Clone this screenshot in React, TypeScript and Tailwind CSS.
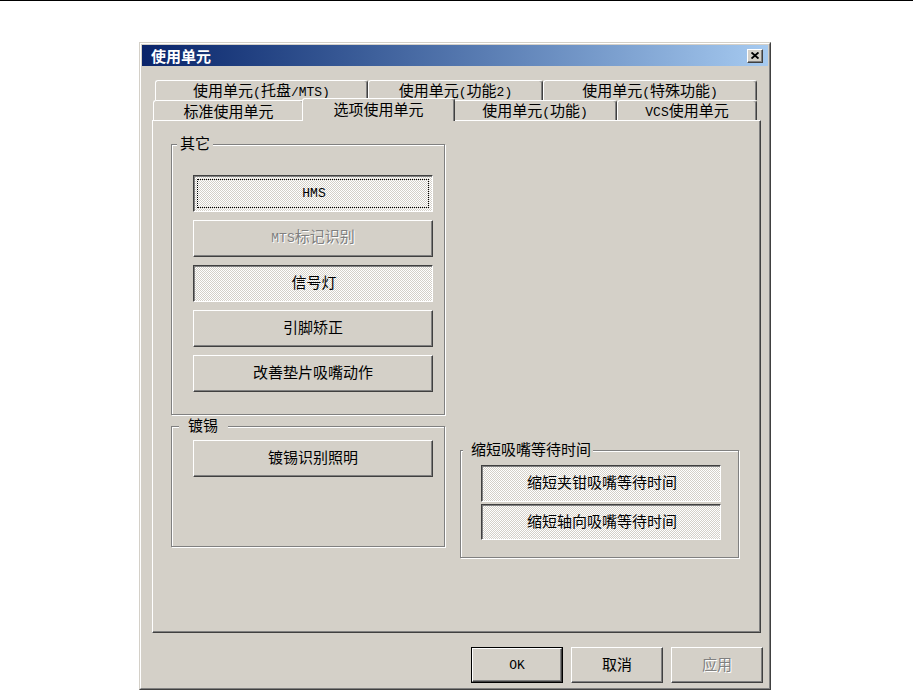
import React from "react";

function T({ s }: { s: string }) {
  const parts = s.split(/([\x00-\x7f]+)/).filter((p) => p.length > 0);
  return (
    <span className="whitespace-pre">
      {parts.map((p, i) =>
        /^[\x00-\x7f]+$/.test(p) ? (
          <span key={i} className="font-['Liberation_Mono',monospace] text-[13px]">
            {p}
          </span>
        ) : (
          <span key={i}>{p}</span>
        )
      )}
    </span>
  );
}

type BtnProps = {
  label: string;
  state?: "normal" | "pressed" | "disabled";
  focus?: boolean;
  className?: string;
};

function Btn({ label, state = "normal", focus = false, className = "" }: BtnProps) {
  const raised =
    "border border-t-white border-l-white border-r-[#404040] border-b-[#404040] shadow-[inset_-1px_-1px_0_#808080] bg-[#d4d0c8]";
  const pressed =
    "border border-t-[#404040] border-l-[#404040] border-r-white border-b-white shadow-[inset_1px_1px_0_#808080] bg-[repeating-conic-gradient(#ffffff_0%_25%,#d4d0c8_0%_50%)] [background-size:2px_2px]";
  return (
    <div
      className={`relative flex items-center justify-center pb-[4px] text-[15px] leading-none ${
        state === "pressed" ? pressed : raised
      } ${state === "disabled" ? "text-[#808080] [text-shadow:1px_1px_0_#ffffff]" : "text-black"} ${className}`}
    >
      {focus && <div className="absolute inset-[3px] border border-dotted border-black" />}
      <span className={state === "pressed" ? "translate-x-px" : ""}>
        <T s={label} />
      </span>
    </div>
  );
}

function Tab({ label, className = "", selected = false }: { label: string; className?: string; selected?: boolean }) {
  return (
    <div
      className={`flex items-center justify-center shrink-0 border-t border-l border-r border-t-white border-l-white border-r-[#404040] rounded-t-[3px] shadow-[inset_-1px_0_0_#808080] bg-[#d4d0c8] text-[15px] leading-none text-black ${
        selected ? "relative z-10 -mt-[2px] -mx-[2px] h-[23px] pb-[3px]" : "h-[20px] pb-px"
      } ${className}`}
    >
      <T s={label} />
    </div>
  );
}

function Group({
  label,
  labelClass,
  className = "",
  children,
}: {
  label: string;
  labelClass: string;
  className?: string;
  children?: React.ReactNode;
}) {
  return (
    <div
      className={`relative border border-[#808080] shadow-[inset_1px_1px_0_#ffffff,1px_1px_0_#ffffff] ${className}`}
    >
      <span className={`absolute -top-[10px] bg-[#d4d0c8] text-[15px] leading-[16px] text-black ${labelClass}`}>
        {label}
      </span>
      {children}
    </div>
  );
}

export default function App() {
  return (
    <div className="w-[913px] h-[690px] overflow-hidden bg-white border-t border-black font-['Noto_Sans_CJK_SC','Liberation_Sans',sans-serif]">
      {/* dialog */}
      <div className="ml-[139px] mt-[41px] w-[632px] h-[648px] border border-t-[#d4d0c8] border-l-[#d4d0c8] border-r-[#404040] border-b-[#404040] bg-[#d4d0c8]">
        <div className="h-full border border-t-white border-l-white border-r-[#808080] border-b-[#808080] p-px flex flex-col">
          {/* title bar */}
          <div className="h-[21px] shrink-0 flex items-center justify-between bg-linear-to-r from-[#0a246a] to-[#a6caf0]">
            <span className="pl-[9px] pb-px text-[15px] leading-none font-bold text-white">使用单元</span>
            <div className="mr-[5px] w-[16px] h-[14px] flex items-center justify-center border border-t-white border-l-white border-r-[#404040] border-b-[#404040] shadow-[inset_-1px_-1px_0_#808080] bg-[#d4d0c8]">
              <svg width="8" height="7" viewBox="0 0 8 7">
                <path d="M0.5 0.5 L7.5 6.5 M7.5 0.5 L0.5 6.5" stroke="#000" strokeWidth="1.9" />
              </svg>
            </div>
          </div>

          {/* tab control */}
          <div className="mt-[14px] ml-[10px] w-[609px] flex flex-col">
            <div className="flex ml-[3px]">
              <Tab label="使用单元(托盘/MTS)" className="w-[213px]" />
              <Tab label="使用单元(功能2)" className="w-[175px]" />
              <Tab label="使用单元(特殊功能)" className="w-[214px]" />
            </div>
            <div className="flex ml-[1px] h-[20px]">
              <Tab label="标准使用单元" className="w-[151px]" />
              <Tab label="选项使用单元" className="w-[153px]" selected />
              <Tab label="使用单元(功能)" className="w-[164px]" />
              <Tab label="VCS使用单元" className="w-[140px]" />
            </div>
            <div className="h-[513px] border border-t-white border-l-white border-r-[#404040] border-b-[#404040] shadow-[inset_-1px_-1px_0_#808080] bg-[#d4d0c8] flex pl-[18px] gap-[15px]">
              {/* left column */}
              <div className="flex flex-col pt-[23px]">
                <Group label="其它" labelClass="left-[5px] px-[3px]" className="w-[274px] h-[271px] pl-[21px] pt-[30px]">
                  <div className="flex flex-col gap-[8px]">
                    <Btn label="HMS" state="pressed" focus className="w-[240px] h-[37px]" />
                    <Btn label="MTS标记识别" state="disabled" className="w-[240px] h-[37px]" />
                    <Btn label="信号灯" state="pressed" className="w-[240px] h-[37px]" />
                    <Btn label="引脚矫正" className="w-[240px] h-[37px]" />
                    <Btn label="改善垫片吸嘴动作" className="w-[240px] h-[37px]" />
                  </div>
                </Group>
                <Group label="镀锡" labelClass="left-[7px] pl-[9px] pr-[10px]" className="mt-[11px] w-[274px] h-[121px] pl-[21px] pt-[13px]">
                  <Btn label="镀锡识别照明" className="w-[240px] h-[37px]" />
                </Group>
              </div>
              {/* right column */}
              <div className="flex flex-col pt-[329px]">
                <Group label="缩短吸嘴等待时间" labelClass="left-[2px] pl-[8px] pr-[2px]" className="w-[279px] h-[108px] pl-[20px] pt-[14px]">
                  <div className="flex flex-col gap-[2px]">
                    <Btn label="缩短夹钳吸嘴等待时间" state="pressed" className="w-[240px] h-[37px]" />
                    <Btn label="缩短轴向吸嘴等待时间" state="pressed" className="w-[240px] h-[36px]" />
                  </div>
                </Group>
              </div>
            </div>
          </div>

          {/* bottom buttons */}
          <div className="mt-[14px] flex justify-end gap-[8px] pr-[5px]">
            <div className="w-[92px] h-[36px] border border-black flex">
              <Btn label="OK" className="flex-1" />
            </div>
            <Btn label="取消" className="w-[92px] h-[36px]" />
            <Btn label="应用" state="disabled" className="w-[92px] h-[36px]" />
          </div>
        </div>
      </div>
    </div>
  );
}
